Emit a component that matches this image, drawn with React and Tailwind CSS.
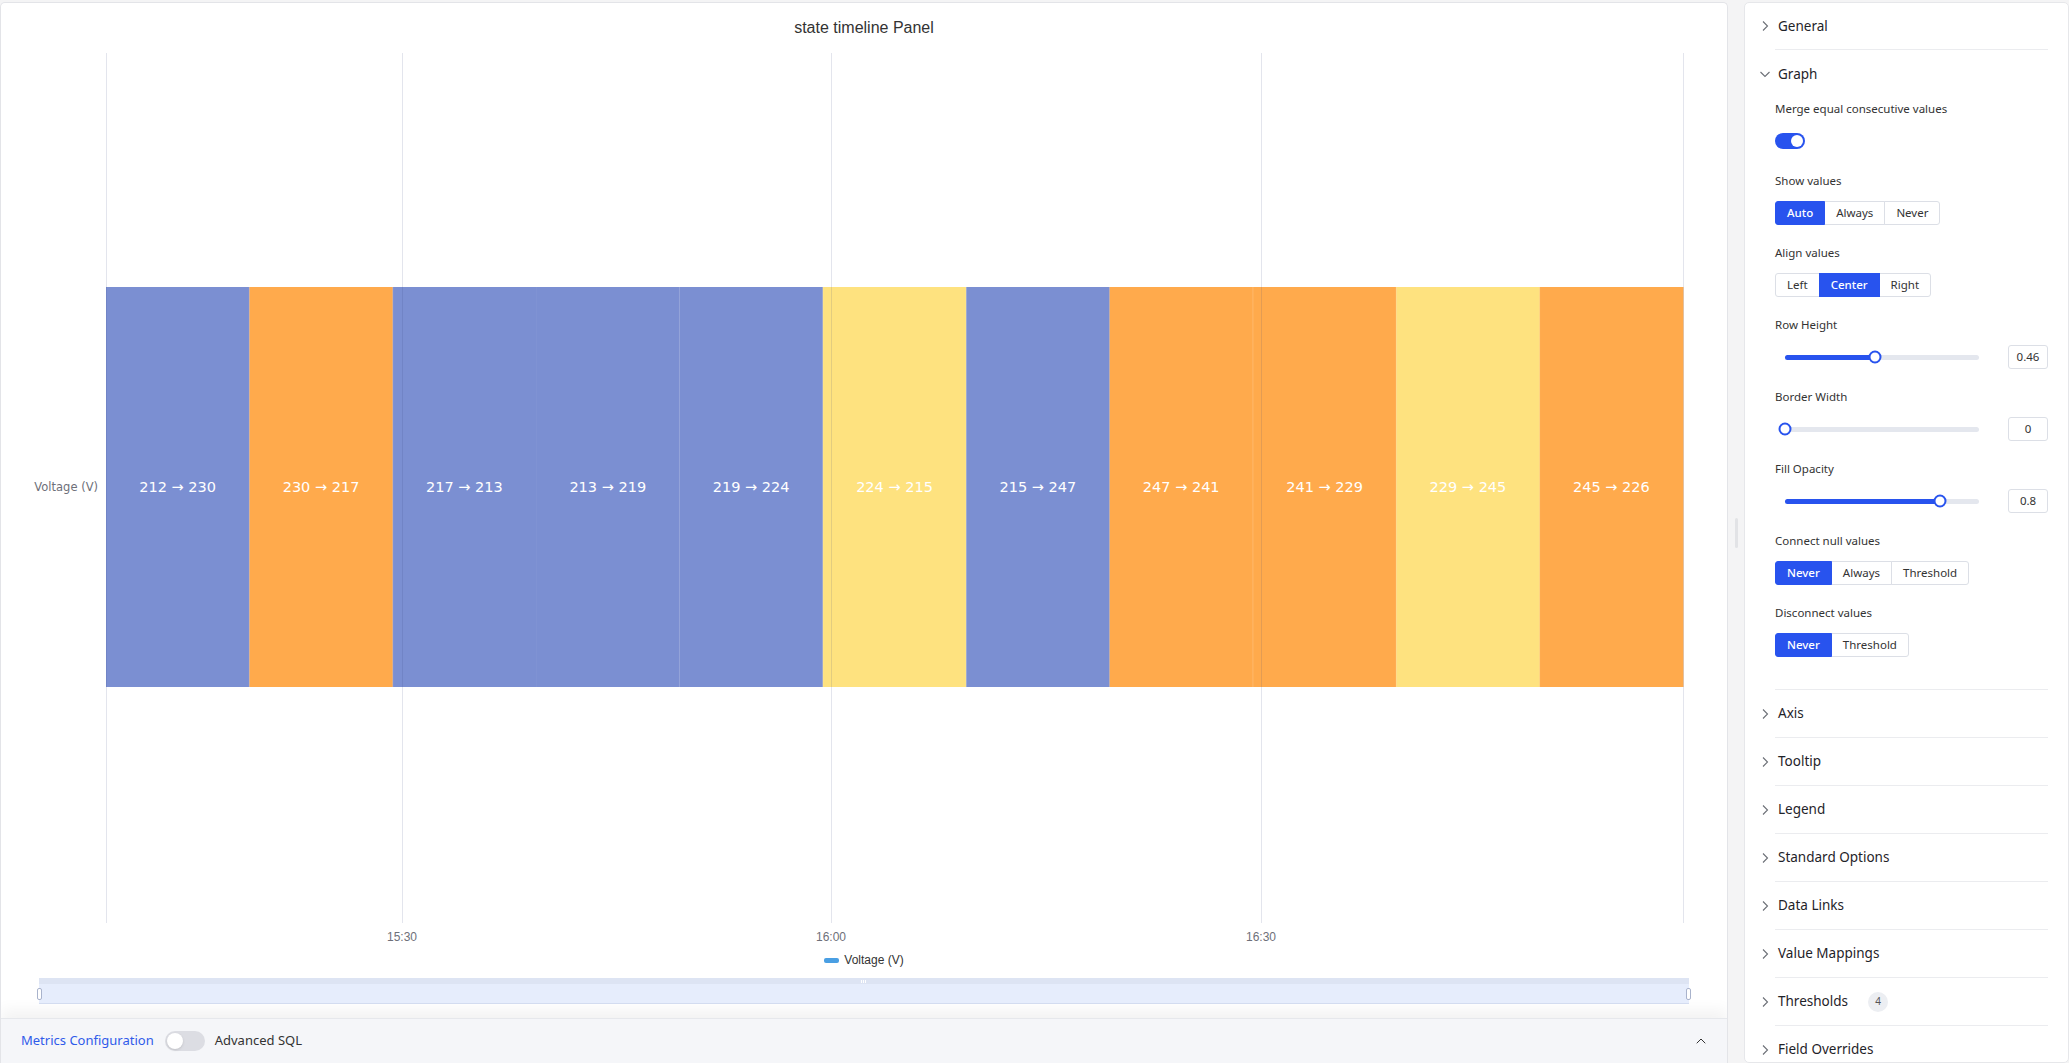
import { ChevronUp } from 'lucide-react';

const SEGMENTS = [
  ['212', '230', 'blue'],
  ['230', '217', 'orange'],
  ['217', '213', 'blue'],
  ['213', '219', 'blue'],
  ['219', '224', 'blue'],
  ['224', '215', 'yellow'],
  ['215', '247', 'blue'],
  ['247', '241', 'orange'],
  ['241', '229', 'orange'],
  ['229', '245', 'yellow'],
  ['245', '226', 'orange'],
];

const FILL = { blue: '#7b8fd2', orange: '#ffaa4c', yellow: '#fee27f' };

const X0 = 105;
const X1 = 1682;
const SEG_W = (X1 - X0) / SEGMENTS.length;
const GRID = [105, 401, 830, 1260, 1682];
const TICKS = [
  ['15:30', 401],
  ['16:00', 830],
  ['16:30', 1260],
];

function TimelineChart() {
  return (
    <svg width="1726" height="897" className="block">
      {SEGMENTS.map(([from, to, c], i) => (
        <rect key={i} x={X0 + i * SEG_W} y={234} width={SEG_W + 0.5} height={400} fill={FILL[c]} />
      ))}
      {SEGMENTS.map((s, i) =>
        i > 0 && i !== 3 ? (
          <line
            key={'sep' + i}
            x1={X0 + i * SEG_W}
            x2={X0 + i * SEG_W}
            y1={234}
            y2={634}
            stroke="rgba(255,255,255,0.18)"
          />
        ) : null
      )}
      {GRID.map((x) => (
        <line key={x} x1={x + 0.5} x2={x + 0.5} y1={0} y2={870} stroke="rgba(60,70,130,0.14)" />
      ))}
      {SEGMENTS.map(([from, to], i) => (
        <text
          key={'t' + i}
          x={X0 + i * SEG_W + SEG_W / 2}
          y={439}
          textAnchor="middle"
          fill="#ffffff"
          fontSize="14.5"
          fontFamily="'DejaVu Sans', sans-serif"
        >
          {from} → {to}
        </text>
      ))}
      <text x={97} y={438} textAnchor="end" fill="#6e7079" fontSize="11.5" fontFamily="'DejaVu Sans', sans-serif">
        Voltage (V)
      </text>
      {TICKS.map(([label, x]) => (
        <text
          key={label}
          x={x}
          y={888}
          textAnchor="middle"
          fill="#6e7079"
          fontSize="12"
          fontFamily="'Liberation Sans', Arial, sans-serif"
        >
          {label}
        </text>
      ))}
    </svg>
  );
}

function Chevron({ open }) {
  return (
    <span className="w-[14px] h-[14px] flex items-center justify-center">
      <svg width="14" height="14" viewBox="0 0 14 14" fill="none" stroke="#6b6f76" strokeWidth="1.1">
        {open ? <path d="M2.5 5 L7 9.5 L11.5 5" /> : <path d="M5 2.5 L9.5 7 L5 11.5" />}
      </svg>
    </span>
  );
}

function Section({ title, badge }) {
  return (
    <div className="h-[48px] border-b border-[#ebecef] flex items-center">
      <div className="-ml-[17px] flex items-center gap-[6px]">
        <Chevron />
        <span className="text-[13.5px] text-[#1f2329]">{title}</span>
        {badge && (
          <span className="ml-[14px] w-[20px] h-[20px] rounded-full bg-[#eceef2] text-[10px] text-[#555] flex items-center justify-center">
            {badge}
          </span>
        )}
      </div>
    </div>
  );
}

function Field({ label, children }) {
  return (
    <div className="h-[72px]">
      <div className="h-[16px] leading-[16px] text-[11.5px] text-[#333]">{label}</div>
      <div className="mt-[12px] h-[24px] flex items-center">{children}</div>
    </div>
  );
}

function Segmented({ options, active }) {
  return (
    <div className="flex h-[24px]">
      {options.map((o, i) => (
        <div
          key={o}
          className={
            (o === active
              ? 'bg-[#2853ee] border-[#2853ee] text-white font-medium z-10 '
              : 'bg-white border-[#dcdfe6] text-[#333] ') +
            (i === 0 ? 'rounded-l-[3px] ' : '-ml-px ') +
            (i === options.length - 1 ? 'rounded-r-[3px] ' : '') +
            'border px-[11px] flex items-center text-[11.5px]'
          }
        >
          {o}
        </div>
      ))}
    </div>
  );
}

function Slider({ value, text }) {
  return (
    <div className="flex items-center w-full">
      <div className="ml-[10px] w-[194px] h-[5px] rounded-full bg-[#e4e7ee] relative">
        <div className="h-full rounded-full bg-[#2853ee]" style={{ width: value * 194 + 'px' }} />
        <div
          className="absolute top-1/2 -translate-y-1/2 -translate-x-1/2 w-[13px] h-[13px] rounded-full bg-white border-2 border-[#2853ee]"
          style={{ left: value * 194 + 'px' }}
        />
      </div>
      <div className="ml-auto w-[40px] h-[24px] border border-[#dcdfe6] rounded-[3px] flex items-center justify-center text-[11.5px] text-[#333]">
        {text}
      </div>
    </div>
  );
}

function SettingsPanel() {
  return (
    <div className="w-[325px] h-full bg-white border border-[#e6e7ea] rounded-[5px] pl-[30px] pr-[20px] overflow-hidden font-['Noto_Sans',sans-serif]">
      <div className="h-[47px] border-b border-[#ebecef] flex items-center">
        <div className="-ml-[17px] flex items-center gap-[6px]">
          <Chevron />
          <span className="text-[13.5px] text-[#1f2329]">General</span>
        </div>
      </div>
      <div className="h-[48px] flex items-center">
        <div className="-ml-[17px] flex items-center gap-[6px]">
          <Chevron open />
          <span className="text-[13.5px] text-[#1f2329]">Graph</span>
        </div>
      </div>
      <div className="pt-[3px] pb-[12px] border-b border-[#ebecef]">
        <Field label="Merge equal consecutive values">
          <div className="w-[30px] h-[16px] rounded-full bg-[#2853ee] flex items-center justify-end pr-[2px]">
            <div className="w-[12px] h-[12px] rounded-full bg-white" />
          </div>
        </Field>
        <Field label="Show values">
          <Segmented options={['Auto', 'Always', 'Never']} active="Auto" />
        </Field>
        <Field label="Align values">
          <Segmented options={['Left', 'Center', 'Right']} active="Center" />
        </Field>
        <Field label="Row Height">
          <Slider value={0.464} text="0.46" />
        </Field>
        <Field label="Border Width">
          <Slider value={0} text="0" />
        </Field>
        <Field label="Fill Opacity">
          <Slider value={0.8} text="0.8" />
        </Field>
        <Field label="Connect null values">
          <Segmented options={['Never', 'Always', 'Threshold']} active="Never" />
        </Field>
        <Field label="Disconnect values">
          <Segmented options={['Never', 'Threshold']} active="Never" />
        </Field>
      </div>
      <Section title="Axis" />
      <Section title="Tooltip" />
      <Section title="Legend" />
      <Section title="Standard Options" />
      <Section title="Data Links" />
      <Section title="Value Mappings" />
      <Section title="Thresholds" badge="4" />
      <Section title="Field Overrides" />
    </div>
  );
}

export default function App() {
  return (
    <div className="w-[2069px] h-[1063px] bg-[#f4f4f5] pt-[2px] flex overflow-hidden">
      <div className="w-[1728px] h-full bg-white border-t border-x border-[#e3e4e8] rounded-t-[5px] flex flex-col overflow-hidden">
        <div className="h-[50px] flex items-center justify-center text-[16px] text-[#333] font-['Liberation_Sans',Arial,sans-serif]">
          state timeline Panel
        </div>
        <TimelineChart />
        <div className="h-[20px] flex items-center justify-center gap-[5px] font-['Liberation_Sans',Arial,sans-serif]">
          <div className="w-[15px] h-[5px] rounded-[2px] bg-[#4a9fe3]" />
          <span className="text-[12px] text-[#333]">Voltage (V)</span>
        </div>
        <div className="mt-[8px] ml-[38px] w-[1650px] h-[26px] relative">
          <div className="h-[6px] bg-[#dde4f3] relative">
            <div className="absolute left-[822px] top-[2px] flex gap-[1px]">
              <div className="w-px h-[3px] bg-white" />
              <div className="w-px h-[3px] bg-white" />
              <div className="w-px h-[3px] bg-white" />
            </div>
          </div>
          <div className="h-[20px] bg-[#e6edfc] border-b border-[#d3dcf0]" />
          <div className="absolute -left-[2px] top-[10px] w-[5px] h-[12px] bg-white border border-[#a9b3cc] rounded-[2px]" />
          <div className="absolute -right-[2px] top-[10px] w-[5px] h-[12px] bg-white border border-[#a9b3cc] rounded-[2px]" />
        </div>
        <div className="flex-1" />
        <div className="h-[45px] shrink-0 bg-[#f5f6f9] border-t border-[#e6e8ec] shadow-[0_-8px_14px_rgba(0,0,0,0.05)] flex items-center pl-[20px] pr-[18px] font-['Noto_Sans',sans-serif]">
          <span className="text-[13px] text-[#2f5bea]">Metrics Configuration</span>
          <div className="ml-[11px] w-[40px] h-[20px] rounded-full bg-[#dcdde3] flex items-center pl-[2px]">
            <div className="w-[16px] h-[16px] rounded-full bg-white shadow-sm" />
          </div>
          <span className="ml-[10px] text-[13px] text-[#333]">Advanced SQL</span>
          <ChevronUp className="ml-auto w-[16px] h-[16px] text-[#333]" strokeWidth={1.5} />
        </div>
      </div>
      <div className="w-[16px] h-full flex items-center justify-center">
        <div className="w-[3px] h-[30px] rounded-full bg-[#e2e3e6]" />
      </div>
      <SettingsPanel />
    </div>
  );
}
